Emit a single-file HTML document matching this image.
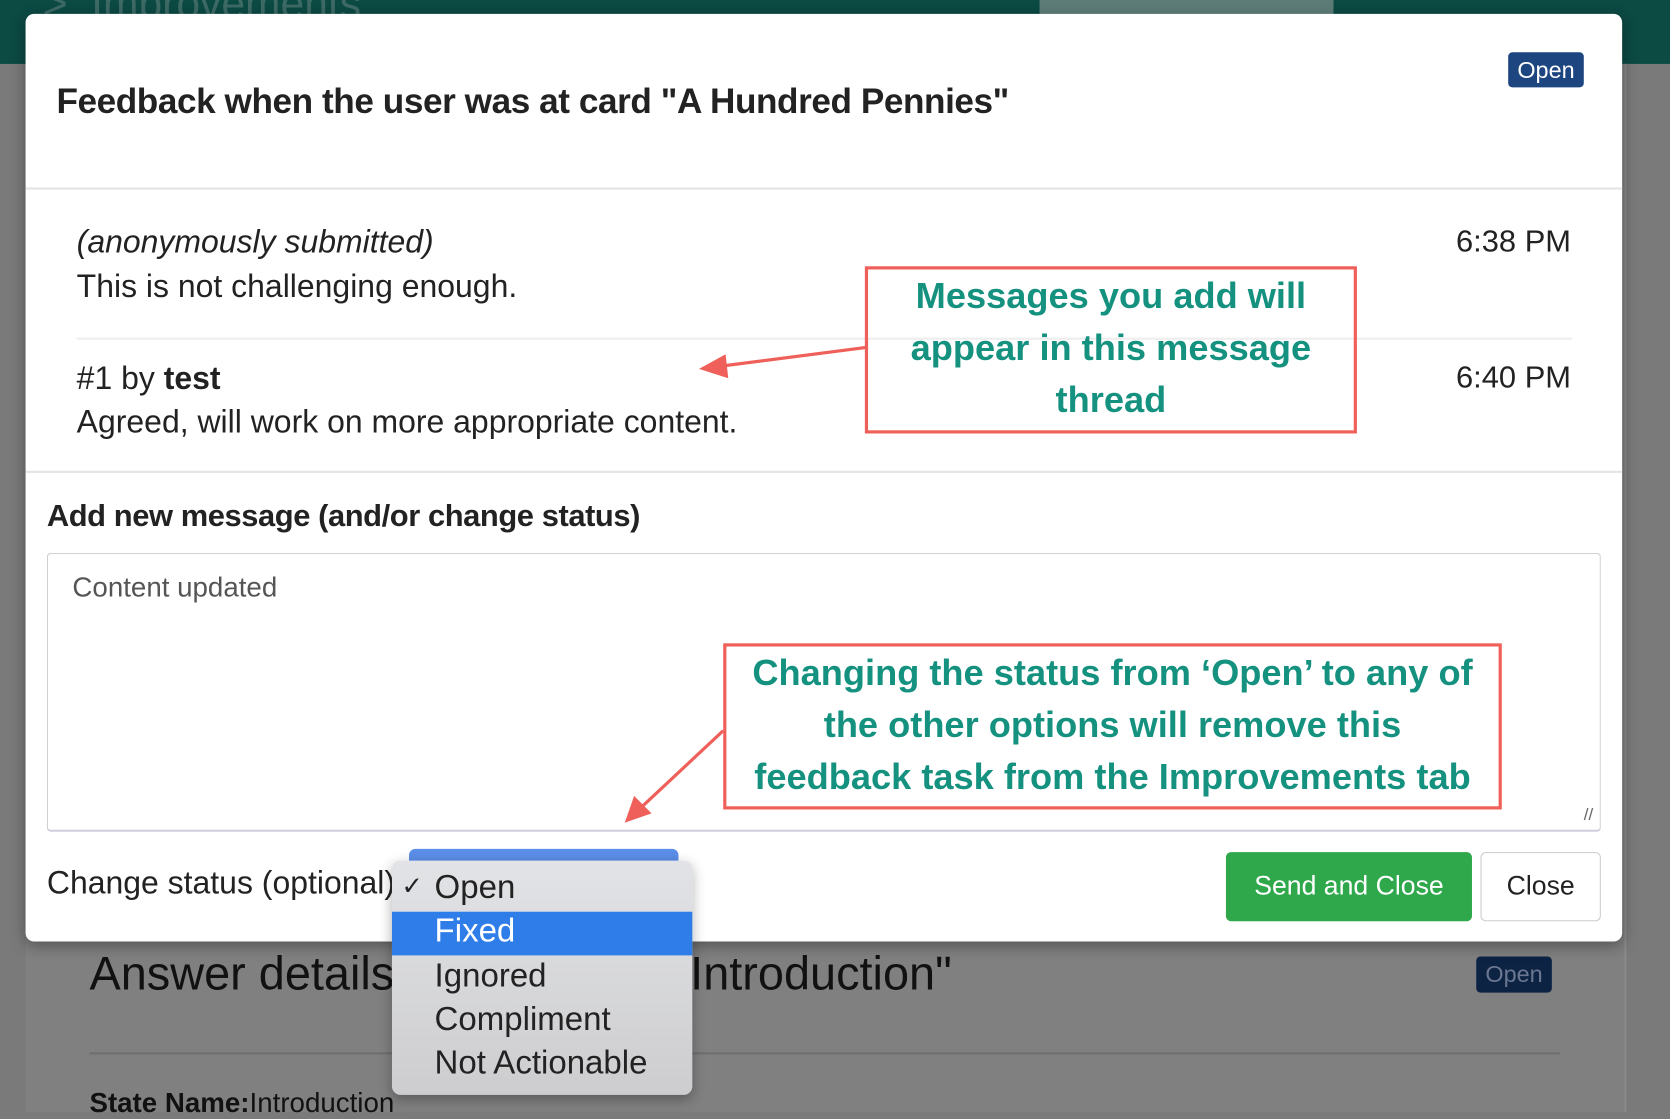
<!DOCTYPE html><html><head><style>
html,body{margin:0;padding:0;width:1670px;height:1112px;overflow:hidden;background:#7a7a7a;font-family:"Liberation Sans",sans-serif}
#w{position:absolute;left:0;top:0;width:1568px;height:1044px;transform:scale(1.0651);transform-origin:0 0}
.a{position:absolute;white-space:nowrap}
.r{position:absolute;}
</style></head><body><div id="w">
<div class="r" style="left:0;top:0;width:1568px;height:60px;background:#0c4a44"></div>
<div class="a" style="left:40px;top:-18px;font-size:40px;color:#3e6a66">&gt;&nbsp; Improvements</div>
<div class="r" style="left:976px;top:0;width:276px;height:14px;background:#5d7c78"></div>
<div class="r" style="left:24px;top:60px;width:1501px;height:984px;background:#808080;border-right:2px solid #8a8a8a"></div>
<div class="a" style="left:84px;top:890px;font-size:44px;color:#111">Answer details</div>
<div class="a" style="left:648px;top:890px;font-size:44px;color:#111">Introduction"</div>
<div class="r" style="left:1386px;top:898px;width:71px;height:34px;background:#0d2344;border-radius:4px;color:#6b7790;font-size:22px;text-align:center;line-height:34px">Open</div>
<div class="r" style="left:84px;top:988px;width:1381px;height:2px;background:#6e6e6e"></div>
<div class="a" style="left:84px;top:1020px;font-size:26px;color:#111"><b>State Name:</b>Introduction</div>

<div class="r" style="left:24px;top:13px;width:1499px;height:871px;background:#fff;border-radius:8px;box-shadow:0 4px 14px rgba(0,0,0,.35)"></div>
<div class="a" style="left:53px;top:76px;font-size:33px;font-weight:bold;color:#222;letter-spacing:-0.4px">Feedback when the user was at card "A Hundred Pennies"</div>
<div class="r" style="left:1416px;top:49px;width:71px;height:33px;background:#1d4580;border-radius:4px;color:#fff;font-size:22px;text-align:center;line-height:33px">Open</div>
<div class="r" style="left:24px;top:176px;width:1499px;height:2px;background:#e4e4e4"></div>
<div class="a" style="left:72px;top:211px;font-size:30px;font-style:italic;color:#222">(anonymously submitted)</div>
<div class="a" style="left:72px;top:253px;font-size:30px;color:#222">This is not challenging enough.</div>
<div class="a" style="right:93px;top:211px;font-size:29px;color:#222">6:38 PM</div>
<div class="r" style="left:72px;top:317px;width:1404px;height:2px;background:#eee"></div>
<div class="a" style="left:72px;top:339px;font-size:30px;color:#222">#1 by <b>test</b></div>
<div class="a" style="left:72px;top:380px;font-size:30px;color:#222">Agreed, will work on more appropriate content.</div>
<div class="a" style="right:93px;top:339px;font-size:29px;color:#222">6:40 PM</div>
<div class="r" style="left:24px;top:442px;width:1499px;height:2px;background:#e4e4e4"></div>
<div class="a" style="left:44px;top:469px;font-size:29px;font-weight:bold;color:#222;letter-spacing:-0.4px">Add new message (and/or change status)</div>
<div class="r" style="left:44px;top:519px;width:1457px;height:259px;border:1px solid #ccc;border-bottom:2px solid #ccd;border-radius:4px"></div>
<div class="a" style="left:68px;top:536px;font-size:26px;color:#555">Content updated</div>
<div class="a" style="left:1487px;top:757px;font-size:16px;color:#666">//</div>
<div class="a" style="left:44px;top:813px;font-size:30px;color:#222">Change status (optional)</div>
<div class="r" style="left:384px;top:797px;width:253px;height:14px;background:#5b8ee8;border-radius:6px 6px 0 0"></div>
<div class="r" style="left:1151px;top:800px;width:231px;height:65px;background:#2ea84a;border-radius:5px;color:#fff;font-size:25px;text-align:center;line-height:65px">Send and Close</div>
<div class="r" style="left:1390px;top:800px;width:111px;height:63px;background:#fff;border:1px solid #ccc;border-radius:5px;color:#222;font-size:25px;text-align:center;line-height:63px">Close</div>

<div class="r" style="left:812px;top:250px;width:456px;height:150px;border:3px solid #f0605a;color:#15917f;font-size:34px;font-weight:bold;text-align:center;line-height:49px;padding-top:1px;box-sizing:content-box">Messages you add will<br>appear in this message<br>thread</div>
<div class="r" style="left:679px;top:604px;width:725px;height:149px;border:3px solid #f0605a;color:#15917f;font-size:34px;font-weight:bold;text-align:center;line-height:49px;padding-top:1px">Changing the status from ‘Open’ to any of<br>the other options will remove this<br>feedback task from the Improvements tab</div>
<svg class="r" style="left:0;top:0" width="1568" height="1044"><g stroke="#f0605a" stroke-width="3" fill="#f0605a"><line x1="815" y1="326" x2="675" y2="344"/><polygon points="660,346 680,335 682,353"/><line x1="679" y1="686" x2="600" y2="760"/><polygon points="589,770 596,750 609,763"/></g></svg>

<div class="r" style="left:368px;top:808px;width:282px;height:220px;background:linear-gradient(#e2e3e6,#cdcdcf);border-radius:8px;box-shadow:0 4px 12px rgba(0,0,0,.3)"></div>
<div class="r" style="left:368px;top:856px;width:282px;height:41px;background:#2e7de9"></div>
<div class="a" style="left:377px;top:818px;font-size:24px;color:#222">✓</div>
<div class="a" style="left:408px;top:815px;font-size:31px;color:#222">Open</div>
<div class="a" style="left:408px;top:856px;font-size:31px;color:#fff">Fixed</div>
<div class="a" style="left:408px;top:898px;font-size:31px;color:#222">Ignored</div>
<div class="a" style="left:408px;top:939px;font-size:31px;color:#222">Compliment</div>
<div class="a" style="left:408px;top:980px;font-size:31px;color:#222">Not Actionable</div>
</div></body></html>
